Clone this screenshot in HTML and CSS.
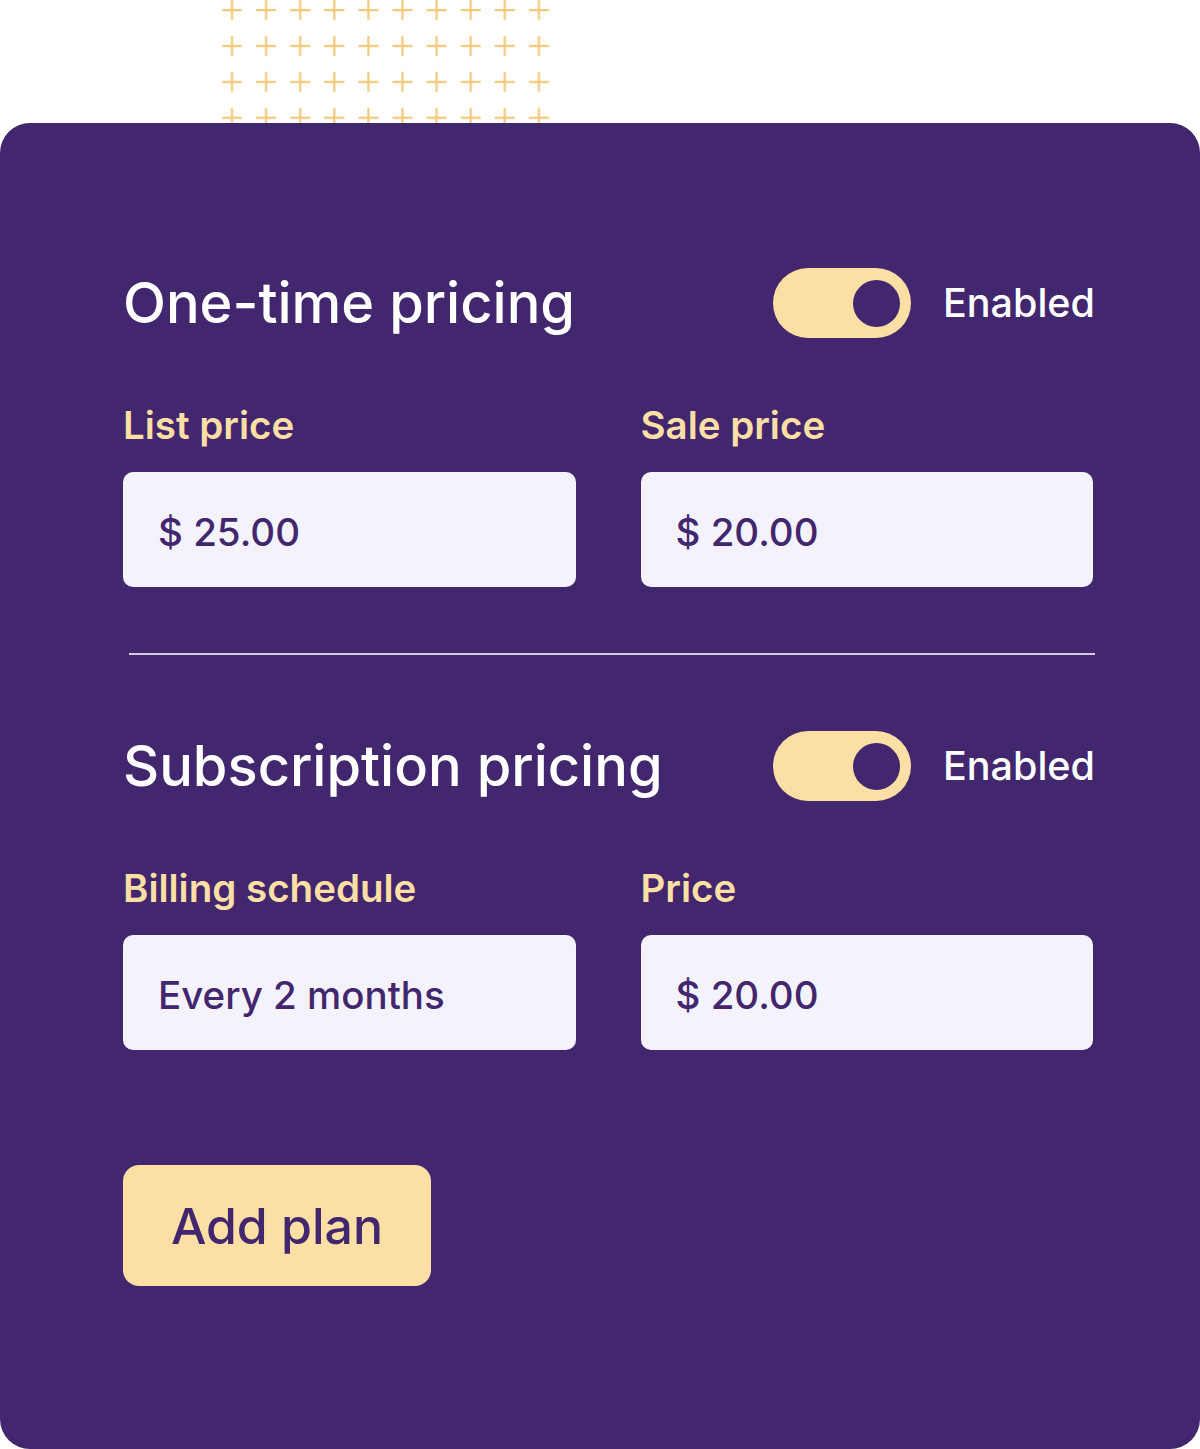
FILE: index.html
```html
<!DOCTYPE html>
<html lang="en">
<head>
    <meta charset="UTF-8">
    <meta name="viewport" content="width=device-width, initial-scale=1.0">
    <title>Pricing plans</title>
    <link rel="stylesheet" href="styles.css">
</head>
<body>
    <div class="pattern">
        <svg width="340" height="130" viewBox="0 0 340 130">
            <defs>
                <pattern id="plus" x="0" y="0" width="34.1" height="35.9" patternUnits="userSpaceOnUse">
                    <path d="M7 10H27M17 0V20" stroke="#f2c97a" stroke-width="2.2" fill="none"/>
                </pattern>
            </defs>
            <rect x="0" y="0" width="340" height="130" fill="url(#plus)"/>
        </svg>
    </div>

    <div class="card">
        <section class="pricing">
            <div class="pricing-head">
                <h2>One-time pricing</h2>
                <div class="toggle-wrap">
                    <span class="toggle"><span class="knob"></span></span>
                    <span class="toggle-label">Enabled</span>
                </div>
            </div>
            <div class="fields">
                <label class="field">
                    <span class="field-label">List price</span>
                    <span class="input">$ 25.00</span>
                </label>
                <label class="field">
                    <span class="field-label">Sale price</span>
                    <span class="input">$ 20.00</span>
                </label>
            </div>
        </section>

        <hr class="divider">

        <section class="pricing">
            <div class="pricing-head">
                <h2>Subscription pricing</h2>
                <div class="toggle-wrap">
                    <span class="toggle"><span class="knob"></span></span>
                    <span class="toggle-label">Enabled</span>
                </div>
            </div>
            <div class="fields">
                <label class="field">
                    <span class="field-label">Billing schedule</span>
                    <span class="input">Every 2 months</span>
                </label>
                <label class="field">
                    <span class="field-label">Price</span>
                    <span class="input">$ 20.00</span>
                </label>
            </div>
        </section>

        <button class="add-btn">Add plan</button>
    </div>
</body>
</html>
```

FILE: styles.css
```css
body {
    margin: 0;
    background: #ffffff;
    font-family: 'Inter', 'Noto Sans', sans-serif;
}

.pattern {
    position: absolute;
    top: 0;
    left: 215px;
    height: 130px;
    overflow: hidden;
}

.pattern svg {
    display: block;
}

.card {
    position: relative;
    margin-top: 123px;
    height: 1326px;
    box-sizing: border-box;
    background: #42276f;
    border-radius: 30px;
    padding: 145px 107px 0 123px;
}

.pricing-head {
    display: flex;
    align-items: center;
    justify-content: space-between;
    height: 70px;
}

.pricing-head h2 {
    margin: 0;
    color: #ffffff;
    font-size: 56px;
    font-weight: 500;
}

.toggle-wrap {
    display: flex;
    align-items: center;
    gap: 32px;
    margin-right: -2px;
}

.toggle {
    display: flex;
    align-items: center;
    justify-content: flex-end;
    width: 138px;
    height: 70px;
    box-sizing: border-box;
    padding-right: 11px;
    border-radius: 35px;
    background: #fcdfa4;
}

.knob {
    width: 47px;
    height: 47px;
    border-radius: 50%;
    background: #42276f;
}

.toggle-label {
    color: #ffffff;
    font-size: 39.5px;
    font-weight: 500;
}

.fields {
    display: grid;
    grid-template-columns: 1fr 1fr;
    gap: 65px;
    margin-top: 65px;
}

.field {
    display: flex;
    flex-direction: column;
    gap: 25px;
}

.field-label {
    color: #fcdfa4;
    font-size: 38.5px;
    font-weight: 600;
    line-height: 44px;
}

.input {
    display: flex;
    align-items: center;
    height: 115px;
    box-sizing: border-box;
    padding: 4px 0 0 35px;
    border-radius: 10px;
    background: #f4f3fb;
    color: #42276f;
    font-size: 38.5px;
    font-weight: 500;
}

.divider {
    margin: 66px -2px 76px 6px;
    border: none;
    height: 2px;
    background: #d4cde3;
}

.add-btn {
    display: block;
    margin-top: 115px;
    width: 308px;
    height: 121px;
    border: none;
    border-radius: 16px;
    background: #fcdfa4;
    color: #42276f;
    font-family: inherit;
    font-size: 50px;
    font-weight: 500;
}
```
